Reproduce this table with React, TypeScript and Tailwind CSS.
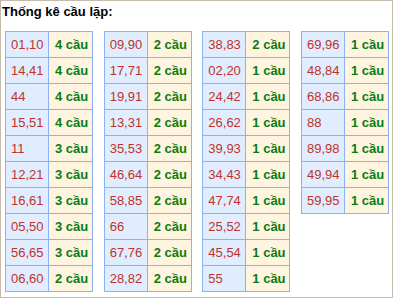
import React from 'react';

const tables: [string, number][][] = [
  [
    ['01,10', 4], ['14,41', 4], ['44', 4], ['15,51', 4], ['11', 3],
    ['12,21', 3], ['16,61', 3], ['05,50', 3], ['56,65', 3], ['06,60', 2],
  ],
  [
    ['09,90', 2], ['17,71', 2], ['19,91', 2], ['13,31', 2], ['35,53', 2],
    ['46,64', 2], ['58,85', 2], ['66', 2], ['67,76', 2], ['28,82', 2],
  ],
  [
    ['38,83', 2], ['02,20', 1], ['24,42', 1], ['26,62', 1], ['39,93', 1],
    ['34,43', 1], ['47,74', 1], ['25,52', 1], ['45,54', 1], ['55', 1],
  ],
  [
    ['69,96', 1], ['48,84', 1], ['68,86', 1], ['88', 1], ['89,98', 1],
    ['49,94', 1], ['59,95', 1],
  ],
];

const App: React.FC = () => {
  return (
    <div className="w-[394px] h-[299px] bg-white font-['Liberation_Sans',Arial,sans-serif]">
      <div className="w-[393px] h-[298px] border border-[#c4bbad] box-border">
        {/* Title */}
        <div className="pl-[1px] pt-[3px] text-[13px] leading-[16px] font-bold text-black">
          Thống kê cầu lặp:
        </div>

        {/* Tables */}
        <div className="flex items-start gap-[10.67px] pl-[4px] mt-[11px]">
          {tables.map((rows, ti) => (
            <table key={ti} className="border-collapse table-fixed w-[87px] text-[13px]">
              <colgroup>
                <col className="w-[43px]" />
                <col className="w-[44px]" />
              </colgroup>
              <tbody>
                {rows.map(([pair, count], ri) => (
                  <tr key={ri} className="h-[26px]">
                    <td className="border border-[#8db2f2] bg-[#e0edff] pl-[5px] py-0 pr-0 text-[#c0332a] leading-[15px] whitespace-nowrap">
                      {pair}
                    </td>
                    <td className="border border-[#8db2f2] bg-[#fff4e0] pl-[6px] py-0 pr-0 font-bold text-[#087d10] leading-[15px] whitespace-nowrap">
                      {count} cầu
                    </td>
                  </tr>
                ))}
              </tbody>
            </table>
          ))}
        </div>
      </div>
    </div>
  );
};

export default App;
